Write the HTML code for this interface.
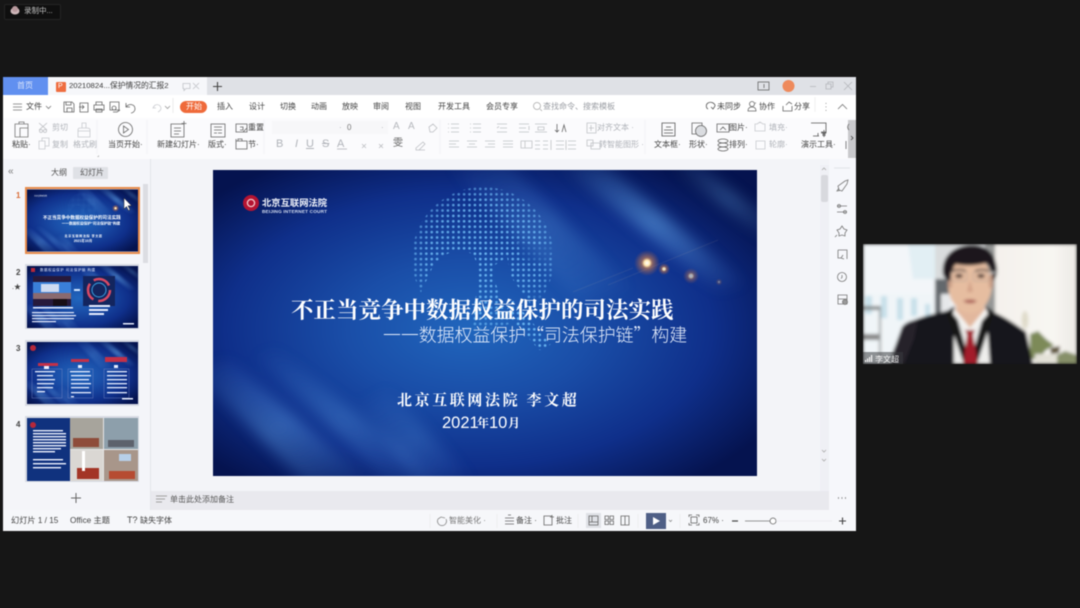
<!DOCTYPE html>
<html lang="zh"><head><meta charset="utf-8"><title>WPS</title>
<style>
html,body{margin:0;padding:0;background:#161616;width:1080px;height:608px;overflow:hidden}
#root{position:absolute;left:0;top:0;width:1080px;height:608px;background:#161616;overflow:hidden;font-family:"Liberation Sans","Noto Sans CJK SC",sans-serif;filter:blur(.4px)}
.b{position:absolute}
.t{position:absolute;white-space:nowrap;font-size:8px;line-height:10px;color:#4a4a4a}
.g{color:#b0b3b9}
.d{color:#444}
svg{position:absolute;left:0;top:0}
</style></head><body><div id="root">

<div class="b" style="left:4px;top:4px;width:55px;height:14px;background:#0f0f0f;border:1px solid #242424;border-radius:2px"></div>
<div class="t" style="left:24px;top:6px;color:#c4c4c4;font-size:7.500px">录制中...</div>

<div class="b" style="left:3px;top:77px;width:853px;height:454px;background:#f4f5f9"></div>
<div class="b" style="left:3px;top:77px;width:853px;height:18px;background:#dfe1e6"></div>
<div class="b" style="left:3px;top:77px;width:45px;height:18px;background:#6190f0"></div>
<div class="b" style="left:48px;top:77px;width:159px;height:18px;background:#f6f7fa"></div>
<div class="t" style="left:17px;top:81px;color:#dbe5fb">首页</div>
<div class="b" style="left:56px;top:82px;width:10px;height:10px;background:#ef6d3f;border-radius:1px"></div>
<div class="t" style="left:58px;top:82px;color:#fff;font-size:7px">P</div>
<div class="t" style="left:69px;top:81px;font-size:7.750px;color:#3a3a3a">20210824...保护情况的汇报2</div>
<div class="b" style="left:3px;top:95px;width:853px;height:23px;background:#fff"></div>
<div class="b" style="left:3px;top:118px;width:853px;height:41px;background:#fbfbfd"></div>

<div class="t d" style="left:26px;top:102px">文件</div>
<div class="b" style="left:180px;top:101px;width:27px;height:12px;background:#ef6a3a;border-radius:6px"></div>
<div class="t" style="left:186px;top:102px;color:#fff">开始</div>
<div class="t d" style="left:217px;top:102px">插入</div>
<div class="t d" style="left:249px;top:102px">设计</div>
<div class="t d" style="left:280px;top:102px">切换</div>
<div class="t d" style="left:311px;top:102px">动画</div>
<div class="t d" style="left:342px;top:102px">放映</div>
<div class="t d" style="left:373px;top:102px">审阅</div>
<div class="t d" style="left:405px;top:102px">视图</div>
<div class="t d" style="left:438px;top:102px">开发工具</div>
<div class="t d" style="left:486px;top:102px">会员专享</div>
<div class="t" style="left:543px;top:102px;color:#9a9da3">查找命令、搜索模板</div>
<div class="t d" style="left:717px;top:102px">未同步</div>
<div class="t d" style="left:759px;top:102px">协作</div>
<div class="t d" style="left:794px;top:102px">分享</div>

<div class="t d" style="left:12px;top:140px">粘贴·</div>
<div class="t g" style="left:52px;top:123px">剪切</div>
<div class="t g" style="left:52px;top:140px">复制</div>
<div class="t g" style="left:73px;top:140px">格式刷</div>
<div class="t d" style="left:108px;top:140px">当页开始·</div>
<div class="t d" style="left:157px;top:140px">新建幻灯片·</div>
<div class="t d" style="left:208px;top:140px">版式·</div>
<div class="t d" style="left:248px;top:123px">重置</div>
<div class="t d" style="left:248px;top:140px">节·</div>
<div class="b" style="left:272px;top:121px;width:116px;height:13px;background:#f7f7f9"></div>
<div class="t" style="left:347px;top:123px;color:#777">0</div>
<div class="t g" style="left:339px;top:123px">·</div>
<div class="t g" style="left:381px;top:123px">·</div>
<div class="t" style="left:393px;top:122px;color:#b6b8bd;font-size:10px">A</div>
<div class="t" style="left:408px;top:122px;color:#b6b8bd;font-size:10px">A</div>
<div class="t g" style="left:276px;top:139px;font-size:11px">B</div>
<div class="t g" style="left:295px;top:139px;font-size:11px;font-style:italic">I</div>
<div class="t g" style="left:306px;top:139px;font-size:11px;text-decoration:underline">U</div>
<div class="t g" style="left:322px;top:139px;font-size:11px;text-decoration:line-through">S</div>
<div class="t g" style="left:337px;top:139px;font-size:11px">A</div>
<div class="t" style="left:393px;top:139px;font-size:10px;color:#666">雯</div>
<div class="t g" style="left:597px;top:123px">对齐文本 ·</div>
<div class="t g" style="left:599px;top:140px">转智能图形 ·</div>
<div class="t d" style="left:654px;top:140px">文本框·</div>
<div class="t d" style="left:689px;top:140px">形状·</div>
<div class="t d" style="left:729px;top:123px">图片·</div>
<div class="t d" style="left:729px;top:140px">排列·</div>
<div class="t g" style="left:769px;top:123px">填充·</div>
<div class="t g" style="left:769px;top:140px">轮廓·</div>
<div class="t d" style="left:801px;top:140px">演示工具·</div>
<div class="b" style="left:691px;top:159px;width:158px;height:3px;background:#1f2a3f"></div>
<div class="b" style="left:848px;top:120px;width:8px;height:38px;background:#c9c9cc"></div>

<div class="b" style="left:150px;top:159px;width:1px;height:351px;background:#e4e5ea"></div>
<div class="b" style="left:151px;top:159px;width:678px;height:332px;background:#f3f4f8"></div>
<div class="b" style="left:151px;top:491px;width:678px;height:19px;background:#e9e9ee"></div>
<div class="b" style="left:829px;top:159px;width:27px;height:351px;background:#f6f7fb"></div>
<div class="b" style="left:820px;top:165px;width:9px;height:326px;background:#eff0f5"></div>
<div class="b" style="left:821px;top:175px;width:7px;height:27px;background:#d8d9de;border-radius:2px"></div>
<div class="b" style="left:3px;top:510px;width:853px;height:21px;background:#f6f7fa"></div>

<div class="t" style="left:51px;top:168px;color:#555">大纲</div>
<div class="b" style="left:73px;top:167px;width:35px;height:12px;background:#dfe1e6;border-radius:1px"></div>
<div class="t" style="left:80px;top:168px;color:#555">幻灯片</div>
<div class="t" style="left:8px;top:167px;color:#777;font-size:10px">«</div>
<div class="t" style="left:16px;top:191px;color:#d96a35;font-size:8px;font-weight:bold">1</div>
<div class="t" style="left:16px;top:268px;color:#444;font-size:8px;font-weight:bold">2</div>
<div class="t" style="left:12px;top:283px;color:#444;font-size:7px">.★</div>
<div class="t" style="left:16px;top:344px;color:#444;font-size:8px;font-weight:bold">3</div>
<div class="t" style="left:16px;top:420px;color:#444;font-size:8px;font-weight:bold">4</div>
<div class="b" style="left:143px;top:184px;width:5px;height:79px;background:#dcdde2"></div>
<div class="t" style="left:170px;top:495px;color:#555">单击此处添加备注</div>

<div class="t d" style="left:11px;top:516px;font-size:8.200px">幻灯片 1 / 15</div>
<div class="t d" style="left:70px;top:516px;font-size:8.200px">Office 主题</div>
<div class="t d" style="left:127px;top:515px;font-size:9px">T?</div>
<div class="t d" style="left:140px;top:516px">缺失字体</div>
<div class="t" style="left:449px;top:516px;color:#777">智能美化 ·</div>
<div class="t d" style="left:516px;top:516px">备注 ·</div>
<div class="t d" style="left:556px;top:516px">批注</div>
<div class="t d" style="left:703px;top:516px;font-size:8px">67% ·</div>

<svg width="1080" height="608" viewBox="0 0 1080 608" fill="none" stroke="#666" stroke-width=".8">
<ellipse cx="15" cy="11" rx="4.500" ry="3.500" fill="#cdb7b9" stroke="none"/><circle cx="15" cy="9" r="3" fill="#b99a9e" stroke="none"/>
<path d="M183 83.500h7v5h-4l-2 2v-2h-1zM193 83l6 6M199 83l-6 6" stroke="#c0c2c7"/>
<path d="M213 86.500h9M217.500 82v9" stroke="#444" stroke-width="1.100"/>
<rect x="758" y="82" width="11" height="8" stroke="#666"/><path d="M764 84v4" stroke="#666"/>
<circle cx="788.500" cy="86" r="6" fill="#ee8a5c" stroke="none"/>
<path d="M810 86.500h6M826 84h5v5h-5zM828 84v-2h5v5h-2M844 82l8 8M852 82l-8 8" stroke="#b4b6bb"/>
<path d="M13 104h9M13 107h9M13 110h9M46 106l2.500 2.500 2.500-2.500" stroke="#777"/>
<path d="M64 102h8l2 2v8h-10zM66 102v3h5v-3M67 112v-4h5v4M80 103h8v9h-8zM79 107h5M82 105l2 2-2 2M94 105h10v5h-10zM96 105v-3h6v3M96 109h6v3h-6zM110 102h9v8h-9zM113 112h4l3-2M114 106a2 2 0 1 0 .1 0M126 103v4h4M126 107c3-4 9-3 9 2 0 2-2 4-4 4" stroke="#666"/>
<path d="M155 105l-2 3h3M153 108c2-5 7-4 8 0 0 2-1 3-3 4" stroke="#ccced2"/>
<path d="M165 106l2.500 2.500 2.500-2.500" stroke="#999"/>
<circle cx="537" cy="106" r="3.500" stroke="#aaa"/><path d="M540 109l2 2" stroke="#aaa"/>
<path d="M708 109a3.500 3.500 0 0 1 0-6 5 5 0 0 1 7 2v1M711 107l2 2 2-3" stroke="#555"/>
<circle cx="752" cy="104" r="2.500"/><path d="M748 111c0-3 2-4 4-4s4 1 4 4zM755 103h1" stroke="#666"/>
<path d="M783 106v5h9v-5M786 105l3-3 3 2" stroke="#666"/>
<path d="M826 103v.8M826 106.500v.8M826 110v.8" stroke="#666"/>
<path d="M838 109l4.500-4.500 4.500 4.500" stroke="#777"/>
<path d="M815 97v15" stroke="#eee"/>
<path d="M173 98v15" stroke="#e6e6e6"/>

<path d="M15 124h13v13h-13zM19 124v-2h5v2M20 128h8v9h-8z" stroke="#777"/>
<path d="M39 130l8-7M47 130l-8-7" stroke="#bdbfc3"/><circle cx="41" cy="131" r="1.500" stroke="#bdbfc3"/><circle cx="45" cy="131" r="1.500" stroke="#bdbfc3"/>
<path d="M39 141h6v8h-6zM42 141v-3h7v8h-4" stroke="#c8cace"/>
<path d="M82 123h4v5h-4zM78 130c0-2 1-2 4-2h4c2 0 4 0 4 2v7h-12zM78 131h12" stroke="#c8cace"/>
<circle cx="125.500" cy="129.500" r="7" stroke="#666"/><path d="M123.500 126l5 3.500-5 3.500z" stroke="#666"/>
<path d="M171 124h13v13h-13zM174 128h7M174 131h7M174 134h5M184 121v5M181.500 123.500h5" stroke="#666"/>
<rect x="211" y="124" width="14" height="13" stroke="#666"/><path d="M214 127h8M214 130h8M214 133h3M218 133h4" stroke="#666"/>
<path d="M236 124h11v8h-11zM240 127h3v3h-3M243 132l4-4" stroke="#666"/>
<path d="M236 141h11v8h-11zM236 139v2M238 141v-2h4v2" stroke="#666"/>
<path d="M337 149h10" stroke="#b0b3b9"/>
<path d="M362 144l4 4M366 144l-4 4M379 144l4 4M383 144l-4 4" stroke="#bdbfc3"/>
<path d="M416 148l7-6 2 2-6 6h-3zM416 150h9" stroke="#bdbfc3"/>
<path d="M429 127l4-3 4 4-4 4h-3z" stroke="#bdbfc3"/>
<g stroke="#c0c2c6">
<path d="M451 124h8M451 128h8M451 132h8M448 124h1M448 128h1M448 132h1M473 124h8M473 128h8M473 132h8M470 124h1M470 128h1M470 132h1"/>
<path d="M497 124h10M500 128h7M497 132h10M497 128l2-1.500M519 124h10M519 132h10M519 128h7M529 126v4"/>
<path d="M535 124h12M535 132h12M538 127h6v3h-6z"/>
<path d="M449 141h10M449 144h7M449 147h10M467 141h10M469 144h6M467 147h10M485 141h10M488 144h7M485 147h10M503 141h10M503 144h10M503 147h10M521 141h11v7h-11zM525 141v7"/>
<path d="M535 141h5M543 141h5M535 145h5M543 145h5M535 149h5M543 149h5M556 141h8M556 145h8M556 149h8M551 140v10M568 141h8M568 145h8M568 149h8M566 140v10"/>
<path d="M587 123h9v10h-9zM589 128h5M591 125v6M587 140h6v6h-6zM591 143h9v6h-9z"/>
</g>
<path d="M557 124v8M555 130l2 2 2-2M562 132l2-7 2 7" stroke="#666"/>
<path d="M662 123h13v13h-13zM666 127h5M664 130h9M664 133h9" stroke="#555"/>
<path d="M692 123h10v11h-10z" stroke="#666"/><circle cx="701" cy="131" r="5.500" fill="#dadce0" stroke="#666"/>
<path d="M717 124h12v8h-12zM720 130l3-3 3 3" stroke="#666"/>
<ellipse cx="723" cy="141" rx="5" ry="2" stroke="#666"/><ellipse cx="723" cy="145" rx="5" ry="2" stroke="#666"/><ellipse cx="723" cy="149" rx="5" ry="2" stroke="#666"/>
<path d="M757 124l3-2 3 2h2v7h-10v-7zM756 141h9v8h-9z" stroke="#c8cace"/>
<path d="M811 123h15v10h-5M818 133v3M813 136h6M824 130v7M821 132h2v4M826 132h-1v4" stroke="#555"/>
<path d="M849 124a4 4 0 0 0 0 6M846 141v8" stroke="#666"/>
<path d="M851 136l2 2-2 2" stroke="#444"/>
<path d="M97 120v34M147 120v34M264 120v34M440 120v34M645 120v34" stroke="#f0f1f4"/>
<path d="M99 155l-2 2h2z" fill="#bbb" stroke="none"/>

<path d="M156 496h11M156 499h9M156 502h6" stroke="#888"/>
<path d="M76 493v10M71 498h10" stroke="#666" stroke-width="1"/>

<g stroke="#777"><path d="M839 190l-1-4 7-5 3-1-1 4-5 7zM839 188l-2 3 3-.5"/>
<path d="M837 206h10M837 212h10"/><circle cx="839" cy="206" r="1.500"/><circle cx="845" cy="212" r="1.500"/>
<path d="M842 226l2 3 3 1-2 3v3l-3-1-3 1v-3l-2-3 3-1zM837 235l-2 2"/>
<path d="M838 250h9v9M838 250v8h3M843 255l-2 3 3 1"/>
<circle cx="842" cy="277" r="4.500"/><path d="M842 275v2.500l-1 1"/>
<path d="M838 295h9v9h-9zM838 299h9"/><circle cx="845" cy="302" r="2.500" fill="#999"/></g>
<path d="M838 498h.9M841.500 498h.9M845 498h.9" stroke="#777" stroke-width="1.400"/>
<path d="M822 170l2-2 2 2M822 450l2 2 2-2M822 459l2 2 2-2" stroke="#aaa"/>
<path d="M834 168h16" stroke="#dedfe4"/>

<path d="M438 519a4.500 4.500 0 1 0 8 0M438 519l3-2 4 1" stroke="#888"/>
<path d="M505 518h9M505 521h9M505 524h9M508 515h3" stroke="#666"/>
<path d="M544 516h8v9h-8zM552 515v4M550 517h4" stroke="#666"/>
<rect x="586" y="513" width="15" height="15" fill="#dfe1e6" stroke="none"/>
<path d="M589 516h9v9h-9zM589 522h9M592 516v6" stroke="#666"/>
<path d="M605 516h3.500v3.500h-3.500zM610 516h3.500v3.500h-3.500zM605 521h3.500v3.500h-3.500zM610 521h3.500v3.500h-3.500zM621 516h4v9h-4zM625 516h4v9h-4z" stroke="#666"/>
<rect x="646" y="513" width="20" height="16" fill="#4f5f86" stroke="none"/><path d="M653 517l7 4-7 4z" fill="#fff" stroke="none"/>
<path d="M669 520l1.500 1.500 1.500-1.500" stroke="#888"/>
<path d="M689 517v-2h3M696 515h3v2M699 523v2h-3M692 525h-3v-2" stroke="#666"/><rect x="691" y="517" width="6" height="6" stroke="#666"/>
<path d="M732 521h6" stroke="#444" stroke-width="1.200"/>
<path d="M745 521h25" stroke="#777"/><circle cx="773" cy="521" r="3" fill="#fff" stroke="#666"/><path d="M776 521h56" stroke="#e8e8ec"/>
<path d="M839 521h7M842.500 517.500v7" stroke="#444" stroke-width="1.100"/>
<path d="M430 514v14M497 514v14M578 514v14M638 514v14M680 514v14" stroke="#eceded"/>
</svg>

<!-- main slide -->
<svg style="left:213px;top:170px" width="544" height="306" viewBox="0 0 544 306" fill="none">
<defs>
<radialGradient id="bg" cx="47%" cy="52%" r="64%">
<stop offset="0" stop-color="#2166bd"/><stop offset=".35" stop-color="#1a4ea8"/><stop offset=".7" stop-color="#0f2f8a"/><stop offset="1" stop-color="#05134f"/></radialGradient>
<linearGradient id="s1" x1="0" y1="0" x2="1" y2="1"><stop offset="0" stop-color="#6fb8f8" stop-opacity="0"/><stop offset=".5" stop-color="#6fb8f8" stop-opacity=".6"/><stop offset="1" stop-color="#6fb8f8" stop-opacity="0"/></linearGradient>
<filter id="bl" x="-50%" y="-50%" width="200%" height="200%"><feGaussianBlur stdDeviation="7"/></filter>
<pattern id="dots" width="5.400" height="5.400" patternUnits="userSpaceOnUse"><circle cx="2.700" cy="2.700" r="1.350" fill="#74c2fa"/></pattern>
<radialGradient id="fl"><stop offset="0" stop-color="#fff"/><stop offset=".22" stop-color="#ffe7b0"/><stop offset=".42" stop-color="#e98a44" stop-opacity=".55"/><stop offset="1" stop-color="#d86a30" stop-opacity="0"/></radialGradient>
<symbol id="bgs" viewBox="0 0 544 306" preserveAspectRatio="none">
<rect width="544" height="306" fill="url(#bg)"/>
<g filter="url(#bl)"><path d="M230-10l60 0 130 130-55 10z" fill="url(#s1)" opacity=".4"/><path d="M340-10l45 0 150 125-30 5z" fill="url(#s1)" opacity=".8"/><path d="M450-10l30 0 90 70-10 15z" fill="url(#s1)" opacity=".5"/><path d="M-20 200l35-10 150 126h-70z" fill="url(#s1)" opacity=".6"/><path d="M40 185l22-6 170 135h-55z" fill="url(#s1)" opacity=".45"/><path d="M145 235l30-15 90 95h-60z" fill="url(#s1)" opacity=".35"/></g>
</symbol>
<radialGradient id="gf" cx="50%" cy="50%" r="50%"><stop offset="0" stop-color="#fff"/><stop offset=".8" stop-color="#fff" stop-opacity=".9"/><stop offset="1" stop-color="#fff" stop-opacity=".6"/></radialGradient>
<mask id="gm"><circle cx="270" cy="88" r="71" fill="url(#gf)"/>
<g fill="#000"><path d="M215 108c8-25 30-32 44-24 6 5 8 30 2 50l-4 30h-52c-4-20 0-40 10-56z"/><path d="M282 95l12-8 4 20 16 22 16 26-30 10-10-30-10-30z"/><path d="M304 72l36 5-6 16-24-4z" opacity=".6"/><path d="M196 130l-8 30 30 0z"/><path d="M318 118l22 20v30h-12l-10-30z" opacity=".5"/></g>
<path d="M300 130l38 44-10 8-36-40z" fill="#fff"/></mask>
</defs>
<use href="#bgs" width="544" height="306"/>
<rect x="190" y="10" width="160" height="170" fill="url(#dots)" mask="url(#gm)" opacity=".85"/>
<path d="M360 122l60-24M395 115l110-45" stroke="#ffd8a0" stroke-opacity=".08" stroke-width="1"/>
<circle cx="434" cy="93" r="13" fill="url(#fl)"/><circle cx="451" cy="99" r="6" fill="url(#fl)" opacity=".9"/><circle cx="478" cy="106" r="8" fill="url(#fl)" opacity=".65"/><circle cx="506" cy="112" r="3.500" fill="url(#fl)" opacity=".4"/>
<circle cx="38" cy="33" r="8" fill="#b51432"/><circle cx="38" cy="33" r="3.600" fill="none" stroke="#f3c9cc" stroke-width="1.300"/>
<g font-family="'Liberation Sans','Noto Sans CJK SC',sans-serif" text-anchor="start">
<text x="49" y="36" font-size="9.300" font-weight="700" fill="#f0f3fb">北京互联网法院</text>
<text x="49" y="43" font-size="4.700" font-weight="700" fill="#d6dff2" textLength="65">BEIJING INTERNET COURT</text>
<text x="229" y="258" font-size="16.500" fill="#fff">2021</text>
</g>
<text x="170" y="171.500" font-size="17.900" font-weight="300" fill="#e6eefc" font-family="'Noto Sans CJK SC',sans-serif">一一数据权益保护“司法保护链”构建</text>
<g font-family="'Liberation Serif','Noto Serif CJK SC',serif" fill="#fff">
<text x="78" y="148" font-size="22.500" font-weight="700">不正当竞争中数据权益保护的司法实践</text>
<text x="184" y="235" font-size="15" font-weight="700" letter-spacing="2.600">北京互联网法院 李文超</text>
<text x="264" y="257" font-size="12" font-weight="700">年</text>
<text x="276" y="258" font-size="16.500" font-family="'Liberation Sans',sans-serif">10</text>
<text x="295" y="257" font-size="12" font-weight="700">月</text>
</g>
</svg>

<!-- thumbnails -->
<div class="b" style="left:25px;top:187px;width:111px;height:63px;border:2px solid #e88b4a;background:#fff"></div>
<svg style="left:27px;top:189px" width="111" height="63" viewBox="0 0 544 306"><use href="#bgs" width="544" height="306"/>
<rect x="190" y="10" width="160" height="170" fill="url(#dots)" mask="url(#gm)" opacity=".3"/><circle cx="434" cy="93" r="18" fill="url(#fl)"/>
<g font-family="'Liberation Sans','Noto Sans CJK SC',sans-serif" fill="#fff"><text x="35" y="36" font-size="9">北京互联网法院</text><text x="78" y="146" font-size="22.500" font-weight="700">不正当竞争中数据权益保护的司法实践</text><text x="170" y="172" font-size="18" font-weight="700">一一数据权益保护“司法保护链”构建</text><text x="184" y="235" font-size="15" letter-spacing="3" font-weight="700">北京互联网法院 李文超</text><text x="229" y="258" font-size="17" font-weight="700">2021年10月</text></g></svg>
<svg style="left:0;top:0" width="1080" height="608"><path d="M124 198v11l2.500-2.500 2 4 1.500-.7-2-4h3.500z" fill="#fff" stroke="#222" stroke-width=".5"/></svg>

<div class="b" style="left:25px;top:264px;width:114px;height:65px;background:#d8dbe4"></div>
<svg style="left:27px;top:266px" width="111" height="62" viewBox="0 0 111 62"><use href="#bgs" width="111" height="62"/>
<rect x="4" y="2" width="4" height="4" fill="#b5283a"/><text x="13" y="5" font-size="3.500" fill="#dfe8ff" font-family="'Liberation Sans','Noto Sans CJK SC',sans-serif" textLength="55">数据权益保护 司法保护链 构建</text>
<rect x="6" y="10" width="38" height="30" fill="#271a3c"/><rect x="6" y="16" width="38" height="11" fill="#3a7fd8"/><rect x="14" y="18" width="18" height="8" fill="#cfdaf0"/><rect x="6" y="27" width="38" height="6" fill="#8a6a70"/><rect x="26" y="33" width="14" height="7" fill="#180e16"/>
<rect x="56" y="10" width="32" height="30" fill="#13255e"/><circle cx="72" cy="24" r="11" fill="none" stroke="#d84a64" stroke-width="2.500" stroke-dasharray="18 5"/><circle cx="72" cy="24" r="7" fill="none" stroke="#38a0e0" stroke-width="1"/>
<rect x="47" y="23" width="6" height="2" fill="#cfe4ff"/>
<g fill="#e8eeff"><rect x="6" y="41" width="40" height="1.500"/><rect x="62" y="39" width="21" height="2"/><rect x="62" y="43" width="19" height="2"/><rect x="62" y="47" width="15" height="2"/><rect x="5" y="46" width="42" height="1.200"/><rect x="5" y="49" width="44" height="1.200"/><rect x="5" y="52" width="42" height="1.200"/><rect x="5" y="55" width="24" height="1.200"/><rect x="96" y="57" width="11" height="1.500"/></g></svg>

<div class="b" style="left:25px;top:340px;width:114px;height:66px;background:#d8dbe4"></div>
<svg style="left:27px;top:342px" width="111" height="62" viewBox="0 0 111 62"><use href="#bgs" width="111" height="62"/>
<circle cx="6" cy="6" r="3" fill="#b5283a"/>
<g fill="#c33048"><rect x="11" y="21" width="20" height="3"/><rect x="44" y="17" width="18" height="3"/><rect x="78" y="15" width="22" height="5"/></g>
<g fill="none" stroke="#7c8dc8" stroke-width=".4"><rect x="5" y="27" width="30" height="29"/><rect x="41" y="27" width="25" height="29"/><rect x="77" y="27" width="25" height="29"/></g>
<g fill="#e8eeff"><rect x="17" y="24" width="5" height="3"/><rect x="51" y="23" width="4" height="3"/><rect x="87" y="23" width="4" height="3"/>
<rect x="8" y="29" width="20" height="1.300"/><rect x="10" y="33" width="16" height="1.300"/><rect x="10" y="37" width="18" height="1.300"/><rect x="10" y="41" width="17" height="1.300"/><rect x="10" y="45" width="16" height="1.300"/><rect x="10" y="49" width="8" height="1.300"/>
<rect x="43" y="29" width="20" height="1.300"/><rect x="44" y="33" width="20" height="1.300"/><rect x="44" y="37" width="18" height="1.300"/><rect x="44" y="41" width="20" height="1.300"/><rect x="44" y="45" width="18" height="1.300"/><rect x="44" y="50" width="20" height="1.300"/><rect x="44" y="54" width="3" height="1.300"/>
<rect x="80" y="29" width="20" height="1.300"/><rect x="80" y="33" width="20" height="1.300"/><rect x="80" y="37" width="20" height="1.300"/><rect x="80" y="41" width="20" height="1.300"/><rect x="80" y="45" width="20" height="1.300"/><rect x="80" y="50" width="20" height="1.300"/><rect x="95" y="56" width="11" height="1.500"/></g></svg>

<div class="b" style="left:25px;top:416px;width:114px;height:66px;background:#d8dbe4"></div>
<svg style="left:27px;top:418px" width="111" height="63" viewBox="0 0 111 63"><rect width="43" height="63" fill="#10327e"/><circle cx="6" cy="7" r="3" fill="#b5283a"/>
<g fill="#eef2ff"><rect x="6" y="12" width="30" height="1.400"/><rect x="6" y="15" width="33" height="1.400"/><rect x="6" y="18" width="33" height="1.400"/><rect x="6" y="21" width="33" height="1.400"/><rect x="6" y="24" width="33" height="1.400"/><rect x="6" y="27" width="33" height="1.400"/><rect x="6" y="30" width="28" height="1.400"/><rect x="6" y="33" width="22" height="1.400"/><rect x="6" y="41" width="30" height="1.400"/><rect x="6" y="45" width="33" height="1.400"/><rect x="6" y="49" width="28" height="1.400"/></g>
<rect x="43" width="68" height="63" fill="#c9c5be"/><rect x="43" width="33" height="31" fill="#a7a49c"/><rect x="76" width="35" height="31" fill="#8d9fab"/><rect x="43" y="31" width="33" height="32" fill="#dad7d3"/><rect x="76" y="31" width="35" height="32" fill="#a8968a"/>
<rect x="46" y="20" width="26" height="9" fill="#8e4c3a"/><rect x="81" y="22" width="26" height="7" fill="#5d626c"/><rect x="50" y="50" width="22" height="11" fill="#a33526"/><rect x="82" y="53" width="26" height="8" fill="#b64b32"/><rect x="92" y="36" width="12" height="7" fill="#b7cfe8"/><rect x="55" y="33" width="3" height="20" fill="#fff"/><rect x="76" y="0" width="1" height="63" fill="#e5e5e5"/><rect x="43" y="31" width="68" height="1" fill="#e5e5e5"/></svg>

<!-- video -->
<svg style="left:863px;top:244px" width="214" height="120" viewBox="0 0 214 120">
<defs><filter id="v" x="0" y="0" width="100%" height="100%"><feGaussianBlur stdDeviation="1.500"/></filter><linearGradient id="w" x1="0" y1="0" x2="1" y2="0"><stop offset="0" stop-color="#f4f1ec"/><stop offset=".7" stop-color="#f8f6f2"/><stop offset="1" stop-color="#eceae5"/></linearGradient></defs>
<g filter="url(#v)">
<rect width="214" height="120" fill="#f3f6f9"/>
<path d="M45 0h28v35H50z" fill="#e2eff4"/><rect x="0" y="50" width="72" height="70" fill="#f0f5f8"/>
<g fill="#c8e0ea"><rect x="2" y="52" width="7" height="18"/><rect x="18" y="52" width="6" height="22"/><rect x="34" y="54" width="6" height="22"/><rect x="48" y="54" width="6" height="18"/><rect x="62" y="60" width="5" height="14"/></g>
<rect x="0" y="62" width="18" height="4" fill="#8b9193"/><rect x="16" y="64" width="2" height="50" fill="#9a9e9f"/>
<rect x="0" y="90" width="16" height="6" fill="#888"/>
<rect x="72" y="0" width="60" height="40" fill="#d9dcdd"/><rect x="72" y="35" width="14" height="60" fill="#63686c"/><rect x="78" y="50" width="10" height="22" fill="#e6e8ea"/>
<rect x="122" y="0" width="12" height="72" fill="#949695"/>
<rect x="132" y="0" width="82" height="120" fill="url(#w)"/>
<ellipse cx="162" cy="76" rx="3.500" ry="9" fill="#e0dccb"/>
<path d="M167 90l8-3 8 8 8 6-9 6-6 8h-9z" fill="#7d8a58"/><path d="M187 104l10-2-1 7-8 1z" fill="#5d5238"/><path d="M192 112l10-5 12 4v9h-22z" fill="#879069"/><path d="M172 110h22v10h-22z" fill="#e4e2d8"/>
<path d="M27 120c3-16 9-28 20-42 14-7 30-9 44-13h32c14 5 28 14 40 23l7 32z" fill="#15151a"/>
<path d="M33 100l6-17c5-6 10-6 16-8l-4 20-10 25H27z" fill="#25242a"/>
<path d="M91 65l16 20 16-20 4 55H91z" fill="#eeeeec"/>
<path d="M91 62l-8 6 18 52h6zM123 62l8 6-17 52h-7z" fill="#141418"/>
<path d="M102 85l5-4 5 4-2 6 5 29h-15l4-29z" fill="#a31c2c"/>
<path d="M97 56h21l6 12-17 18-16-18z" fill="#e2b79d"/><path d="M91 64l16 20 16-20 2 6-14 16h-8l-13-16z" fill="#f4f3f0"/>
<ellipse cx="107" cy="40" rx="22" ry="29" fill="#e6bda0"/>
<rect x="85" y="30" width="4" height="14" fill="#c89c84" rx="2"/><rect x="126" y="30" width="4" height="14" fill="#c89c84" rx="2"/>
<path d="M80 30C78 10 94 1 109 1c17 0 25 12 25 27-1 5-2 7-4 9-1-9-3-15-7-18-10 3-24 3-30 1-4 4-5 11-6 17-3-1-6-3-7-7z" fill="#1b191e"/>
<path d="M88 27c5-2 11-2 15 0M112 27c5-2 10-2 14 0" stroke="#2a2326" stroke-width="1.500" fill="none"/>
<ellipse cx="96" cy="32" rx="4" ry="2" fill="#3c2c2a"/><ellipse cx="118" cy="32" rx="4" ry="2" fill="#3c2c2a"/>
<rect x="88" y="28" width="16" height="9" rx="2" fill="none" stroke="#a99a90" stroke-width=".7"/><rect x="110" y="28" width="16" height="9" rx="2" fill="none" stroke="#a99a90" stroke-width=".7"/><path d="M126 30l7-2" stroke="#eee" stroke-width="1"/>
<path d="M107 36l-3 12h6z" fill="#d3a288"/><path d="M100 57c4-2 10-2 14 0-3 3-10 3-14 0z" fill="#a85a52"/>
</g>
<rect x="0" y="108" width="40" height="12" fill="#3b3d40" opacity=".55"/>
<g fill="#f5f5f5"><rect x="2" y="116" width="1.200" height="2"/><rect x="4" y="114.500" width="1.200" height="3.500"/><rect x="6" y="113" width="1.200" height="5"/><rect x="8" y="111" width="1.200" height="7"/></g>
<text x="12" y="118" font-size="8" fill="#f2f2f2" font-family="'Liberation Sans','Noto Sans CJK SC',sans-serif">李文超</text>
</svg>

</div></body></html>
